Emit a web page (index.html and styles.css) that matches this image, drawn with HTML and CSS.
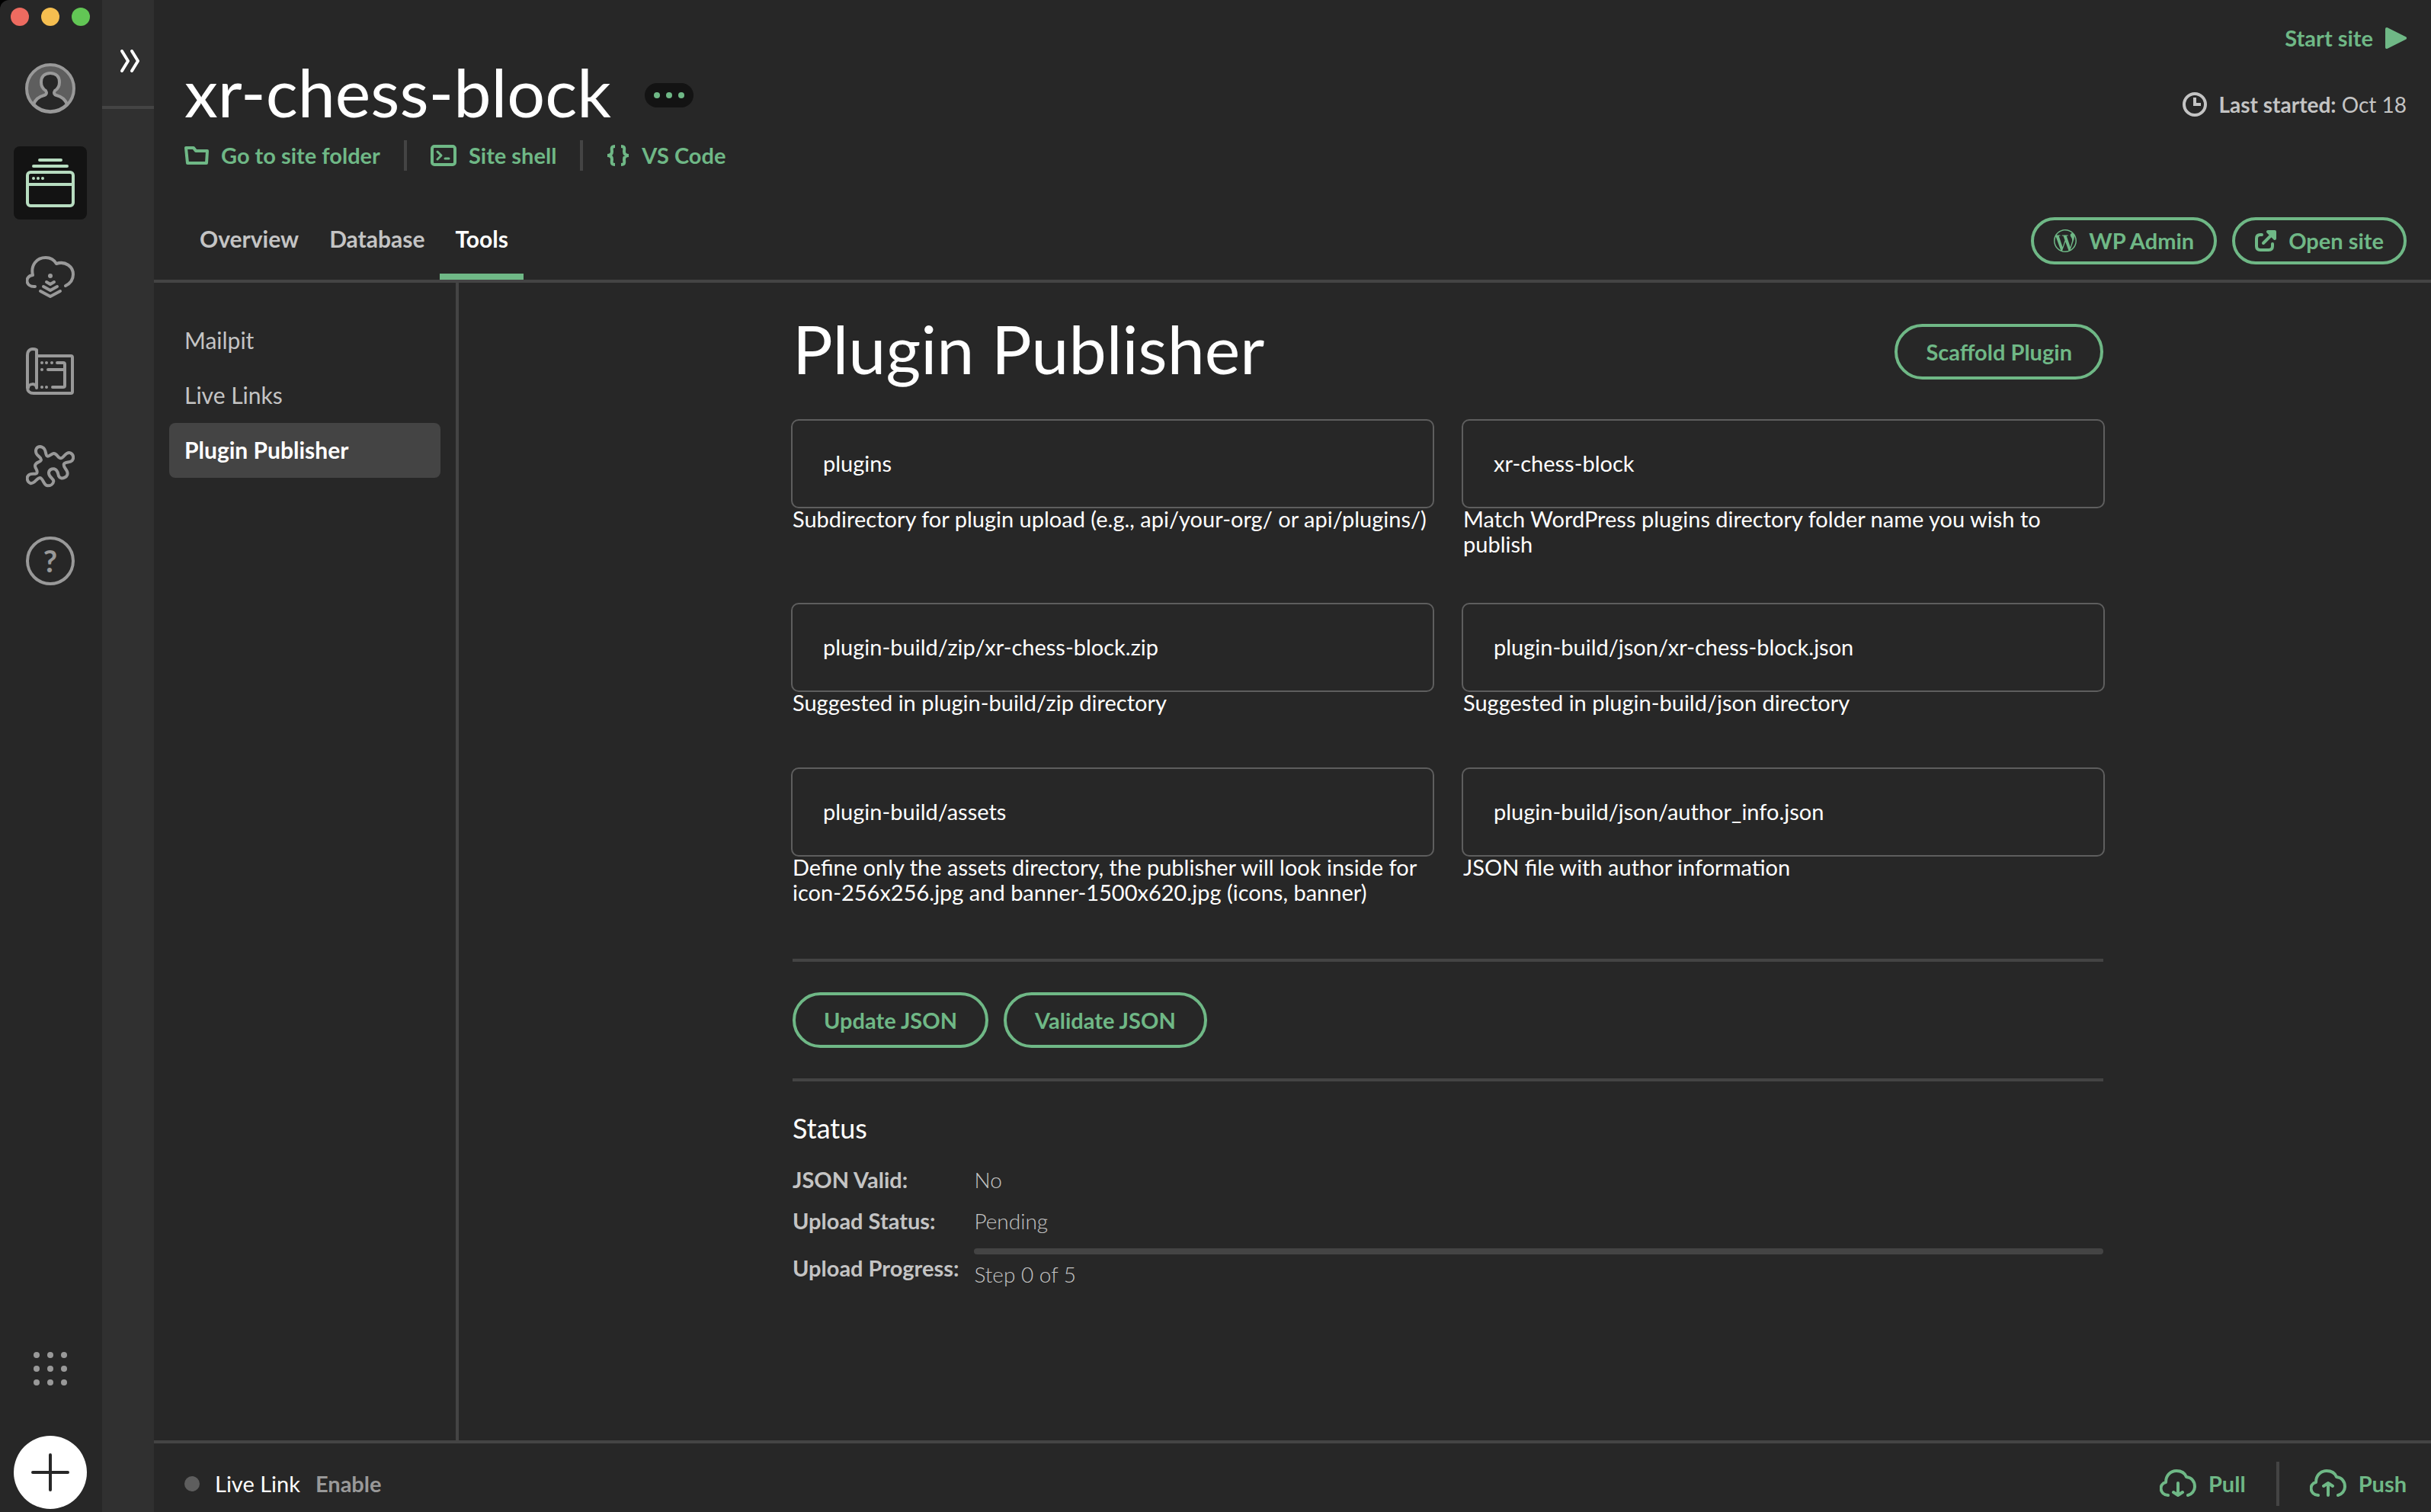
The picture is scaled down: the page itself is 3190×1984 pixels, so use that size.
FILE: index.html
```html
<!DOCTYPE html>
<html lang="en">
<head>
<meta charset="utf-8">
<meta name="viewport" content="width=device-width, initial-scale=1">
<title>xr-chess-block – Local</title>
<link rel="stylesheet" href="styles.css">
</head>
<body>
<div class="app">
  <nav class="rail" aria-label="Main">
    <div class="window-controls">
      <span class="dot dot-close"></span>
      <span class="dot dot-min"></span>
      <span class="dot dot-max"></span>
    </div>
    <button class="rail-item" aria-label="Account">
      <svg width="66" height="66" viewBox="0 0 66 66" fill="none" stroke="#999" stroke-width="4">
        <circle cx="33" cy="33" r="31" fill="#5e5e5e"/>
        <path fill="#272727" d="M11 54C14 46 21 43 25 42C28 41 29 39 27 36C22 33 21 29 21 25C21 17 26 13 33 13S45 17 45 25C45 29 44 33 39 36C37 39 38 41 41 42C45 43 52 46 55 54A31 31 0 0 1 11 54Z"/>
      </svg>
    </button>
    <button class="rail-item rail-item-active" aria-label="Local sites">
      <svg width="64" height="64" viewBox="0 0 64 64" fill="none" stroke="#b7dcc0" stroke-width="4" stroke-linecap="round">
        <path d="M18 2H46M10 10H54M2 34H62"/>
        <rect x="2" y="18" width="60" height="44" rx="4"/>
        <g fill="#b7dcc0" stroke="none"><circle cx="10" cy="26" r="2"/><circle cx="16" cy="26" r="2"/><circle cx="22" cy="26" r="2"/></g>
      </svg>
    </button>
    <button class="rail-item" aria-label="Connect">
      <svg width="64" height="56" viewBox="0 0 64 56" fill="none" stroke="#999" stroke-width="4" stroke-linecap="round" stroke-linejoin="round">
        <path d="M12 40C-1 41-2 26 9 25C6 12 14 2 26 2C32 2 37 5 40 10C52 6 62 14 62 24C62 31 58 36 52 39"/>
        <path d="M27 34l5 3 5-3M23 40l9 5 9-5M19 46l13 7 13-7"/>
        <circle cx="32" cy="26" r="3" fill="#999" stroke="none"/>
      </svg>
    </button>
    <button class="rail-item" aria-label="Blueprints">
      <svg width="64" height="64" viewBox="0 0 64 64" fill="none" stroke="#999" stroke-width="4" stroke-linecap="round" stroke-linejoin="round">
        <path d="M14 53V3C6 0 2 4 2 10V53C2 57 5 60 10 60H59Q61 60 61 58V13Q61 11 59 11H15M3 53C3 47 14 46 14 53"/>
        <path d="M41 20H49Q51 20 51 22V50Q51 52 49 52H35M29 29H51"/>
        <g fill="#999" stroke="none"><circle cx="21" cy="20" r="2"/><circle cx="27" cy="20" r="2"/><circle cx="34" cy="20" r="2"/><circle cx="21" cy="29" r="2"/><circle cx="21" cy="52" r="2"/><circle cx="27" cy="52" r="2"/></g>
      </svg>
    </button>
    <button class="rail-item" aria-label="Add-ons">
      <svg width="64" height="56" viewBox="102 552 192 168" fill="none" stroke="#999" stroke-width="12" stroke-linejoin="round">
        <path d="M158 558C143 558 138 572 143 585C148 597 163 600 162 610C160 621 138 618 138 634C138 645 150 650 145 662C140 670 122 660 112 671C103 680 107 697 119 702C135 707 145 680 158 681C170 683 172 712 188 712C198 712 210 706 211 694C211 684 192 678 192 662C192 650 203 644 213 646C228 649 228 665 231 674C235 683 245 684 254 680C265 675 268 665 264 656C260 645 247 637 252 626C257 617 275 622 284 613C292 603 289 588 277 583C257 577 252 604 239 604C227 604 225 584 211 585C202 586 195 598 187 596C176 593 186 562 158 558Z"/>
      </svg>
    </button>
    <button class="rail-item" aria-label="Help">
      <span class="help-mark">?</span>
    </button>
    <button class="rail-item rail-apps" aria-label="Apps">
      <svg width="44" height="44" viewBox="0 0 44 44" fill="#999">
        <circle cx="4" cy="4" r="4"/><circle cx="22" cy="4" r="4"/><circle cx="40" cy="4" r="4"/>
        <circle cx="4" cy="22" r="4"/><circle cx="22" cy="22" r="4"/><circle cx="40" cy="22" r="4"/>
        <circle cx="4" cy="40" r="4"/><circle cx="22" cy="40" r="4"/><circle cx="40" cy="40" r="4"/>
      </svg>
    </button>
    <button class="rail-item rail-add" aria-label="Add site">
      <svg width="50" height="50" viewBox="0 0 50 50" fill="none" stroke="#272727" stroke-width="4" stroke-linecap="round">
        <path d="M25 2V48M2 25H48"/>
      </svg>
    </button>
  </nav>

  <aside class="drawer">
    <button class="drawer-toggle" aria-label="Show site list">
      <svg width="28" height="32" viewBox="0 0 28 32" fill="none" stroke="#fff" stroke-width="4" stroke-linecap="round" stroke-linejoin="round">
        <path d="M3 3L11 16L3 29M16 3L24 16L16 29"/>
      </svg>
    </button>
  </aside>

  <div class="site">
    <header class="site-head">
      <div class="site-top">
        <div class="site-info">
          <div class="title-row">
            <h1 class="title">xr-chess-block</h1>
            <button class="more" aria-label="More"><span class="more-dot"></span><span class="more-dot"></span><span class="more-dot"></span></button>
          </div>
          <div class="links">
            <a class="link" href="#folder">
              <svg width="32" height="26" viewBox="0 0 32 26" fill="none" stroke="currentColor" stroke-width="4" stroke-linejoin="round"><path d="M2 3H12L15 7H30L29 23H4Z"/></svg>
              Go to site folder</a>
            <a class="link" href="#shell">
              <svg width="34" height="28" viewBox="0 0 34 28" fill="none" stroke="currentColor" stroke-width="4"><rect x="2" y="2" width="30" height="24" rx="3"/><path stroke-width="3" stroke-linecap="round" stroke-linejoin="round" d="M9 9L14 14L9 19M19 18H24"/></svg>
              Site shell</a>
            <a class="link" href="#code">
              <svg width="30" height="28" viewBox="0 0 30 28" fill="none" stroke="currentColor" stroke-width="4"><path d="M11 2C5 2 7 6 7 9C7 12 5 14 1 14C5 14 7 16 7 19C7 22 5 26 11 26M19 2C25 2 23 6 23 9C23 12 25 14 29 14C25 14 23 16 23 19C23 22 25 26 19 26"/></svg>
              VS Code</a>
          </div>
        </div>
        <div class="meta">
          <button class="start">Start site
            <svg width="28" height="28" viewBox="0 0 28 28" fill="currentColor" stroke="currentColor" stroke-width="4" stroke-linejoin="round"><path d="M2 2L26 14L2 26Z"/></svg>
          </button>
          <p class="started">
            <svg width="32" height="32" viewBox="0 0 32 32" fill="none" stroke="currentColor" stroke-width="4"><circle cx="16" cy="16" r="14"/><path d="M16 7V16H24"/></svg>
            <span><strong>Last started:</strong> Oct 18</span>
          </p>
        </div>
      </div>
      <div class="tab-row">
        <nav class="tabs" aria-label="Site">
          <a class="tab" href="#overview">Overview</a>
          <a class="tab" href="#database">Database</a>
          <a class="tab tab-active" href="#tools" aria-current="page">Tools</a>
        </nav>
        <div class="actions">
          <button class="pill pill-small">
            <svg width="30" height="30" viewBox="0 0 24 24" fill="currentColor"><path d="M21.469 6.825c.84 1.537 1.318 3.3 1.318 5.175 0 3.979-2.156 7.456-5.363 9.325l3.295-9.527c.615-1.54.82-2.771.82-3.864 0-.405-.026-.78-.07-1.11m-7.981.105c.647-.03 1.232-.105 1.232-.105.582-.075.514-.93-.067-.899 0 0-1.755.135-2.88.135-1.064 0-2.85-.15-2.85-.15-.585-.03-.661.855-.075.885 0 0 .54.061 1.125.09l1.68 4.605-2.37 7.08L5.354 6.9c.649-.03 1.234-.1 1.234-.1.585-.075.516-.93-.065-.896 0 0-1.746.138-2.874.138-.2 0-.438-.008-.69-.015C4.911 3.15 8.235 1.215 12 1.215c2.809 0 5.365 1.072 7.286 2.833-.046-.003-.091-.009-.141-.009-1.06 0-1.812.923-1.812 1.914 0 .89.513 1.643 1.06 2.531.411.72.89 1.643.89 2.977 0 .915-.354 1.994-.821 3.479l-1.075 3.585-3.9-11.61.001.014zM12 22.784c-1.059 0-2.081-.153-3.048-.437l3.237-9.406 3.315 9.087c.024.053.05.101.078.149-1.12.393-2.325.609-3.582.609M1.211 12c0-1.564.336-3.05.935-4.39L7.29 21.709C3.694 19.96 1.212 16.271 1.211 12M12 0C5.385 0 0 5.385 0 12s5.385 12 12 12 12-5.385 12-12S18.615 0 12 0"/></svg>
            WP Admin</button>
          <button class="pill pill-small">
            <svg width="28" height="28" viewBox="0 0 28 28" fill="none" stroke="currentColor" stroke-width="4" stroke-linecap="round" stroke-linejoin="round"><path d="M9 6H7Q2 6 2 11V21Q2 26 7 26H18Q23 26 23 21V18M11 17L24 4"/><path fill="currentColor" d="M17 2H26V11Z"/></svg>
            Open site</button>
        </div>
      </div>
    </header>

    <div class="site-body">
      <nav class="side" aria-label="Tools">
        <a class="side-link" href="#mailpit">Mailpit</a>
        <a class="side-link" href="#live-links">Live Links</a>
        <a class="side-link side-link-active" href="#plugin-publisher" aria-current="page">Plugin Publisher</a>
      </nav>

      <main class="main">
        <div class="content">
          <div class="content-head">
            <h2 class="content-title">Plugin Publisher</h2>
            <button class="pill">Scaffold Plugin</button>
          </div>

          <form class="fields">
            <div class="field">
              <input class="input" type="text" value="plugins" aria-labelledby="hint-dir">
              <p class="hint" id="hint-dir">Subdirectory for plugin upload (e.g., api/your-org/ or api/plugins/)</p>
            </div>
            <div class="field">
              <input class="input" type="text" value="xr-chess-block" aria-labelledby="hint-name">
              <p class="hint" id="hint-name">Match WordPress plugins directory folder name you wish to publish</p>
            </div>
            <div class="field">
              <input class="input" type="text" value="plugin-build/zip/xr-chess-block.zip" aria-labelledby="hint-zip">
              <p class="hint" id="hint-zip">Suggested in plugin-build/zip directory</p>
            </div>
            <div class="field">
              <input class="input" type="text" value="plugin-build/json/xr-chess-block.json" aria-labelledby="hint-json">
              <p class="hint" id="hint-json">Suggested in plugin-build/json directory</p>
            </div>
            <div class="field">
              <input class="input" type="text" value="plugin-build/assets" aria-labelledby="hint-assets">
              <p class="hint" id="hint-assets">Define only the assets directory, the publisher will look inside for icon-256x256.jpg and banner-1500x620.jpg (icons, banner)</p>
            </div>
            <div class="field">
              <input class="input" type="text" value="plugin-build/json/author_info.json" aria-labelledby="hint-author">
              <p class="hint" id="hint-author">JSON file with author information</p>
            </div>
          </form>

          <div class="json-actions">
            <button class="pill">Update JSON</button>
            <button class="pill">Validate JSON</button>
          </div>

          <section>
            <h3 class="status-title">Status</h3>
            <dl class="status">
              <dt>JSON Valid:</dt>
              <dd>No</dd>
              <dt>Upload Status:</dt>
              <dd>Pending</dd>
              <dt>Upload Progress:</dt>
              <dd>
                <progress class="progress" value="0" max="5" aria-label="Upload progress"></progress>
                <span>Step 0 of 5</span>
              </dd>
            </dl>
          </section>
        </div>
      </main>
    </div>

    <footer class="foot">
      <div class="live">
        <span class="live-dot"></span>
        <span class="live-name">Live Link</span>
        <button class="live-enable">Enable</button>
      </div>
      <div class="sync">
        <button class="sync-button">
          <svg width="48" height="38" viewBox="0 0 48 38" fill="none" stroke="currentColor" stroke-width="4" stroke-linecap="round" stroke-linejoin="round"><path d="M11 34C-1 33-1 19 8 17C8 8 14 2 22 2C28 2 33 5 35 10C43 11 46 17 46 23C46 28 42 33 37 34M24 18V34M18 30L24 34L30 30"/></svg>
          Pull</button>
        <button class="sync-button">
          <svg width="48" height="38" viewBox="0 0 48 38" fill="none" stroke="currentColor" stroke-width="4" stroke-linecap="round" stroke-linejoin="round"><path d="M11 34C-1 33-1 19 8 17C8 8 14 2 22 2C28 2 33 5 35 10C43 11 46 17 46 23C46 28 42 33 37 34M24 34V18M18 22L24 18L30 22"/></svg>
          Push</button>
      </div>
    </footer>
  </div>
</div>
</body>
</html>
```
FILE: styles.css
```css
:root {
  --bg: #272727;
  --line: #444;
  --green: #6fb886;
  --muted: #999;
  --soft: #c4c4c4;
}

* { box-sizing: border-box; margin: 0; padding: 0; }

html { background: #000; }

body {
  font: 400 29px/36px Lato, "Noto Sans", sans-serif;
  color: #fff;
}

button, input {
  font: inherit;
  color: inherit;
  background: none;
  border: 0;
}

a { color: inherit; text-decoration: none; }
svg { display: block; flex: none; }

.app {
  display: flex;
  min-height: 100vh;
  background: var(--bg);
  border-top-left-radius: 12px;
  overflow: hidden;
}

/* Left icon rail */
.rail {
  display: flex;
  flex-direction: column;
  align-items: center;
  gap: 28px;
  width: 134px;
  padding: 10px 2px 4px 0;
}

.window-controls { display: flex; gap: 16px; margin-bottom: 6px; }
.dot { width: 24px; height: 24px; border-radius: 50%; }
.dot-close { background: #ed6b60; }
.dot-min { background: #f5be50; }
.dot-max { background: #62c655; }

.rail-item {
  display: flex;
  align-items: center;
  justify-content: center;
  width: 96px;
  height: 96px;
  border-radius: 8px;
}
.rail-item-active { background: #131313; }
.rail-apps { margin-top: auto; }
.rail-add { margin-top: 12px; border-radius: 50%; background: #fff; }

.help-mark {
  width: 64px;
  height: 64px;
  border: 4px solid var(--muted);
  border-radius: 50%;
  color: var(--muted);
  font-size: 40px;
  font-weight: 700;
  line-height: 56px;
  text-align: center;
}

/* Collapsed site list */
.drawer { width: 68px; background: #303030; }
.drawer-toggle {
  display: flex;
  align-items: center;
  justify-content: center;
  width: 100%;
  height: 143px;
  padding: 20px 0 0 6px;
  border-bottom: 4px solid var(--line);
}

.site { display: flex; flex: 1; flex-direction: column; min-width: 0; }

/* Site header */
.site-head {
  padding: 0 32px 0 40px;
  border-bottom: 4px solid var(--line);
}
.site-top { display: flex; justify-content: space-between; }
.site-info { padding-top: 76px; }

.title-row { display: flex; align-items: center; gap: 44px; }
.title { font-size: 88px; font-weight: 400; line-height: 88px; }
.more {
  display: flex;
  align-items: center;
  justify-content: center;
  gap: 8px;
  width: 64px;
  height: 32px;
  margin-top: 10px;
  border-radius: 16px;
  background: #131313;
}
.more-dot { width: 8px; height: 8px; border-radius: 50%; background: var(--green); }

.links { display: flex; margin-top: 20px; line-height: 40px; }
.link {
  display: flex;
  align-items: center;
  gap: 16px;
  color: var(--green);
  font-weight: 700;
}
.link + .link {
  margin-left: 31px;
  padding-left: 31px;
  border-left: 4px solid var(--line);
}

.meta {
  display: flex;
  flex-direction: column;
  align-items: flex-end;
  gap: 47px;
  padding-top: 30px;
  line-height: 40px;
}
.start {
  display: flex;
  align-items: center;
  gap: 16px;
  color: var(--green);
  font-weight: 700;
}
.started {
  display: flex;
  align-items: center;
  gap: 16px;
  color: var(--soft);
  font-size: 28px;
}

.tab-row {
  display: flex;
  align-items: flex-end;
  justify-content: space-between;
  margin-top: 61px;
}
.tabs { display: flex; }
.tab {
  padding: 0 20px 28px;
  border-bottom: 8px solid transparent;
  color: var(--soft);
  font-size: 30px;
  font-weight: 700;
}
.tab-active { border-color: var(--green); color: #fff; }

.actions { display: flex; gap: 20px; margin-bottom: 20px; }

.pill {
  display: flex;
  align-items: center;
  height: 73px;
  padding: 0 37px;
  border: 4px solid var(--green);
  border-radius: 37px;
  color: var(--green);
  font-weight: 700;
}
.pill-small { gap: 16px; height: 62px; padding: 0 26px; }

/* Body */
.site-body { display: flex; flex: 1; }
.side {
  flex: none;
  width: 400px;
  padding: 40px 20px;
  border-right: 4px solid var(--line);
}
.side-link {
  display: block;
  padding: 0 20px 2px;
  border-radius: 8px;
  color: var(--soft);
  font-size: 30px;
  line-height: 70px;
}
.side-link-active { background: var(--line); color: #fff; font-weight: 700; }

.main { flex: 1; min-width: 0; padding: 54px 40px 40px 48px; }
.content { max-width: 1720px; margin: 0 auto; }
.content-head { display: flex; justify-content: space-between; }
.content-title { font-size: 88px; font-weight: 400; line-height: 64px; }

.fields {
  display: grid;
  grid-template-columns: 1fr 1fr;
  gap: 58px 36px;
  margin: 52px -2px 0;
}
.field { min-height: 158px; }
.input {
  display: block;
  width: 100%;
  height: 117px;
  padding: 0 40px 2px;
  border: 2px solid #5e5e5e;
  border-radius: 10px;
}
.hint { margin: -3px 0 3px; padding: 0 2px; line-height: 33px; }

.json-actions {
  display: flex;
  gap: 20px;
  margin-top: 68px;
  padding: 40px 0;
  border: solid var(--line);
  border-width: 4px 0;
}

.status-title { margin: 39px 0 28px; font-size: 36px; font-weight: 400; line-height: 44px; }
.status {
  display: grid;
  grid-template-columns: auto 1fr;
  align-items: center;
  gap: 18px 20px;
  color: var(--soft);
}
.status dt { font-weight: 700; }
.status dd { font-size: 28px; font-weight: 300; }

.progress {
  display: block;
  width: 100%;
  height: 8px;
  margin-bottom: 8px;
  border: 0;
  border-radius: 4px;
  background: var(--line);
  appearance: none;
  overflow: hidden;
}
.progress::-webkit-progress-bar { background: var(--line); }
.progress::-webkit-progress-value { background: var(--green); }

/* Footer */
.foot {
  display: flex;
  align-items: center;
  justify-content: space-between;
  padding: 24px 32px 8px 40px;
  border-top: 4px solid var(--line);
}
.live, .sync { display: flex; align-items: center; }
.live { gap: 20px; }
.live-dot { width: 20px; height: 20px; border-radius: 50%; background: #5e5e5e; }
.live-enable { color: var(--muted); font-weight: 700; }
.sync-button {
  display: flex;
  align-items: center;
  gap: 16px;
  height: 58px;
  color: var(--green);
  font-weight: 700;
}
.sync-button + .sync-button {
  margin-left: 40px;
  padding-left: 40px;
  border-left: 4px solid var(--line);
}
```
